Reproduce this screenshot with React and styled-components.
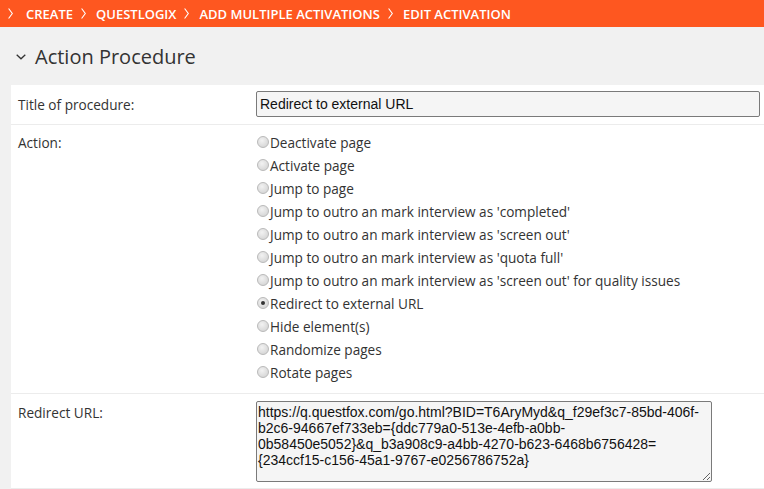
import React from "react";
import styled, { createGlobalStyle } from "styled-components";

const GlobalStyle = createGlobalStyle`
  html, body {
    margin: 0;
    padding: 0;
    background: #f1f1f1;
    overflow: hidden;
  }
  body {
    font-family: "Open Sans", "Liberation Sans", sans-serif;
    color: #333;
  }
`;

const Breadcrumb = styled.div`
  height: 27px;
  background: #fe5720;
  display: flex;
  align-items: center;
  padding-left: 8px;
  color: #fff;
  font-size: 13px;
  font-weight: 600;
  text-transform: uppercase;
  white-space: nowrap;
`;

const Crumb = styled.span`
  display: flex;
  align-items: center;
  margin-right: 8px;
`;

const Chevron = styled.svg`
  width: 5px;
  height: 11px;
  margin-right: ${(p) => (p.$first ? "13px" : "10px")};
  flex-shrink: 0;
`;

const Heading = styled.h1`
  margin: 0;
  height: 58px;
  display: flex;
  align-items: center;
  padding-left: 16px;
  font-size: 20px;
  font-weight: 400;
  color: #333;
`;

const Toggle = styled.svg`
  width: 10px;
  height: 6px;
  margin-right: 9px;
  margin-top: 2px;
`;

const Panel = styled.div`
  margin-left: 11px;
  background: #fff;
`;

const Row = styled.div`
  display: grid;
  grid-template-columns: 238px 1fr;
  align-items: ${(p) => (p.$center ? "center" : "start")};
  padding: ${(p) => p.$pad || "6px 4px 9px 7px"};
  border-bottom: 1px solid #ececec;
  font-size: 13.6px;
`;

const Label = styled.div`
  line-height: 23px;
  color: #333;
`;

const TextInput = styled.input`
  box-sizing: border-box;
  height: 26px;
  width: 100%;
  border: 1px solid #7a7a7a;
  border-radius: 2px;
  background: #f5f5f5;
  padding: 0 3px;
  font-family: "Liberation Sans", Arial, sans-serif;
  font-size: 14px;
  color: #111;
  outline: none;
`;

const Options = styled.div`
  display: flex;
  flex-direction: column;
`;

const Option = styled.label`
  display: flex;
  align-items: center;
  height: 23px;
  color: #333;
  white-space: nowrap;
`;

const Radio = styled.span`
  box-sizing: border-box;
  width: 12px;
  height: 12px;
  margin: 0 1px 1px 1px;
  border-radius: 50%;
  border: 1px solid #b9b9b9;
  background: radial-gradient(circle at 40% 35%, #f2f2f2 0%, #d9d9d9 70%, #cfcfcf 100%);
  display: flex;
  align-items: center;
  justify-content: center;
  flex-shrink: 0;

  &::after {
    content: "";
    width: 4px;
    height: 4px;
    border-radius: 50%;
    background: ${(p) => (p.$checked ? "#333" : "transparent")};
  }
`;

const TextArea = styled.textarea`
  box-sizing: border-box;
  width: 456px;
  height: 81px;
  border: 1px solid #7a7a7a;
  border-radius: 2px;
  background: #f5f5f5;
  padding: 2px 1px;
  font-family: "Liberation Sans", Arial, sans-serif;
  font-size: 14px;
  line-height: 16px;
  color: #111;
  resize: both;
  outline: none;
  overflow: hidden;
  display: block;
`;

const crumbs = ["Create", "Questlogix", "Add multiple activations", "Edit activation"];

const actions = [
  "Deactivate page",
  "Activate page",
  "Jump to page",
  "Jump to outro an mark interview as 'completed'",
  "Jump to outro an mark interview as 'screen out'",
  "Jump to outro an mark interview as 'quota full'",
  "Jump to outro an mark interview as 'screen out' for quality issues",
  "Redirect to external URL",
  "Hide element(s)",
  "Randomize pages",
  "Rotate pages",
];

const url =
  "https://q.questfox.com/go.html?BID=T6AryMyd&q_f29ef3c7-85bd-406f-b2c6-94667ef733eb={ddc779a0-513e-4efb-a0bb-0b58450e5052}&q_b3a908c9-a4bb-4270-b623-6468b6756428={234ccf15-c156-45a1-9767-e0256786752a}";

export default function App() {
  return (
    <>
      <GlobalStyle />
      <Breadcrumb>
        {crumbs.map((c, i) => (
          <Crumb key={c}>
            <Chevron viewBox="0 0 5 11" $first={i === 0}>
              <path d="M0.6 0.5 L4.3 5.5 L0.6 10.5" fill="none" stroke="#fff" strokeWidth="1.1" />
            </Chevron>
            {c}
          </Crumb>
        ))}
      </Breadcrumb>

      <Heading>
        <Toggle viewBox="0 0 10 6">
          <path d="M0.7 0.8 L5 4.8 L9.3 0.8" fill="none" stroke="#333" strokeWidth="1.3" />
        </Toggle>
        Action Procedure
      </Heading>

      <Panel>
        <Row $center $pad="6px 4px 7px 7px">
          <Label>Title of procedure:</Label>
          <TextInput defaultValue="Redirect to external URL" />
        </Row>

        <Row>
          <Label>Action:</Label>
          <Options>
            {actions.map((a) => (
              <Option key={a}>
                <Radio $checked={a === "Redirect to external URL"} />
                {a}
              </Option>
            ))}
          </Options>
        </Row>

        <Row $pad="7px 4px 6px 7px">
          <Label>Redirect URL:</Label>
          <TextArea defaultValue={url} spellCheck={false} />
        </Row>
      </Panel>
    </>
  );
}
